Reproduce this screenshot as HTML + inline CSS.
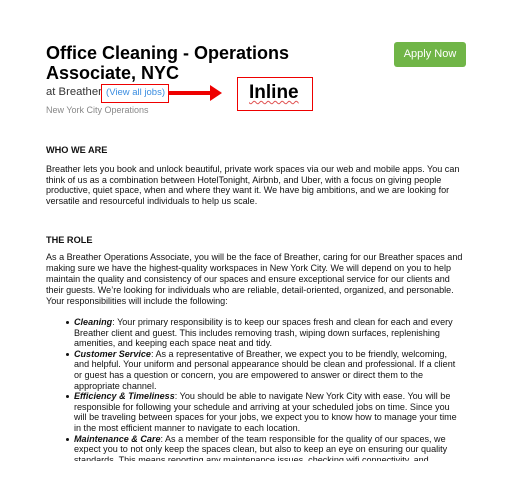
<!DOCTYPE html>
<html><head><meta charset="utf-8"><style>
body{margin:0;width:521px;height:490px;background:#fff;position:relative;overflow:hidden;font-family:"Liberation Sans",Arial,sans-serif;color:#111}
.a{position:absolute;white-space:nowrap}
.p{font-size:9.05px;line-height:10.6px;left:46px}
ul{margin:0;padding:0;list-style:none}
li{position:relative;padding-left:28px}
li:before{content:"";position:absolute;left:20px;top:4px;width:3px;height:3px;background:#111;border-radius:50%}
</style></head><body>
<div class="a" style="left:46px;top:43px;font-size:18px;font-weight:bold;line-height:20px;color:#000">Office Cleaning - Operations<br>Associate, NYC</div>
<div class="a" style="left:46px;top:86px;font-size:11.3px;color:#333">at Breather <span style="color:#3a8de0;font-size:9.5px;margin-left:1px">(View all jobs)</span></div>
<div class="a" style="left:46px;top:105px;font-size:9px;color:#888">New York City Operations</div>
<div class="a" style="left:101px;top:84px;width:66px;height:17px;border:1px solid #e00"></div>
<div class="a" style="left:169px;top:91px;width:44px;height:4px;background:#e00"></div>
<svg class="a" style="left:210px;top:85px" width="14" height="16"><polygon points="0,0 12,8 0,16" fill="#e00"/></svg>
<div class="a" style="left:237px;top:77px;width:74px;height:32px;border:1px solid #e00"></div>
<div class="a" style="left:249px;top:82px;font-size:19px;font-weight:bold;color:#000;text-decoration:underline wavy #e05050;text-decoration-thickness:1px;text-underline-offset:2px">Inline</div>
<div class="a" style="left:394px;top:42px;width:72px;height:25px;background:#70b547;border-radius:3px;color:#fff;font-size:11px;line-height:25px;text-align:center">Apply Now</div>
<div class="a" style="left:46px;top:145px;font-size:9.2px;font-weight:bold">WHO WE ARE</div>
<div class="a p" style="top:164px">Breather lets you book and unlock beautiful, private work spaces via our web and mobile apps. You can<br>think of us as a combination between HotelTonight, Airbnb, and Uber, with a focus on giving people<br>productive, quiet space, when and where they want it. We have big ambitions, and we are looking for<br>versatile and resourceful individuals to help us scale.</div>
<div class="a" style="left:46px;top:235px;font-size:9.2px;font-weight:bold">THE ROLE</div>
<div class="a p" style="top:252px;line-height:11px">As a Breather Operations Associate, you will be the face of Breather, caring for our Breather spaces and<br>making sure we have the highest-quality workspaces in New York City. We will depend on you to help<br>maintain the quality and consistency of our spaces and ensure exceptional service for our clients and<br>their guests. We’re looking for individuals who are reliable, detail-oriented, organized, and personable.<br>Your responsibilities will include the following:</div>
<div class="a p" style="top:317px">
<ul>
<li><b><i>Cleaning</i></b>: Your primary responsibility is to keep our spaces fresh and clean for each and every<br>Breather client and guest. This includes removing trash, wiping down surfaces, replenishing<br>amenities, and keeping each space neat and tidy.</li>
<li><b><i>Customer Service</i></b>: As a representative of Breather, we expect you to be friendly, welcoming,<br>and helpful. Your uniform and personal appearance should be clean and professional. If a client<br>or guest has a question or concern, you are empowered to answer or direct them to the<br>appropriate channel.</li>
<li><b><i>Efficiency &amp; Timeliness</i></b>: You should be able to navigate New York City with ease. You will be<br>responsible for following your schedule and arriving at your scheduled jobs on time. Since you<br>will be traveling between spaces for your jobs, we expect you to know how to manage your time<br>in the most efficient manner to navigate to each location.</li>
<li><b><i>Maintenance &amp; Care</i></b>: As a member of the team responsible for the quality of our spaces, we<br>expect you to not only keep the spaces clean, but also to keep an eye on ensuring our quality<br>standards. This means reporting any maintenance issues, checking wifi connectivity, and<br>more text</li>
</ul></div>
<div class="a" style="left:0;top:461px;width:521px;height:29px;background:#fff"></div>
</body></html>
